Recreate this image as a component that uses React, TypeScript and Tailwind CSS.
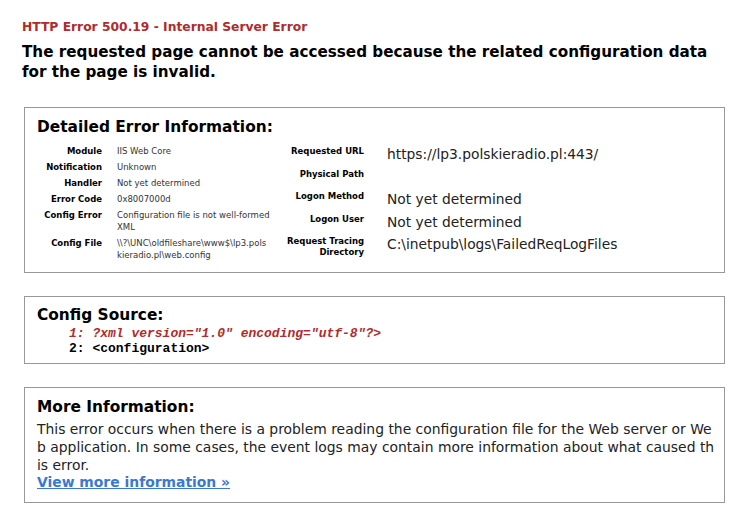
const sans = "font-['DejaVu_Sans','Verdana',sans-serif]"
const mono = "font-['Liberation_Mono','Courier_New',monospace]"

const leftRows: { label: string; value: string[] }[] = [
  { label: "Module", value: ["IIS Web Core"] },
  { label: "Notification", value: ["Unknown"] },
  { label: "Handler", value: ["Not yet determined"] },
  { label: "Error Code", value: ["0x8007000d"] },
  { label: "Config Error", value: ["Configuration file is not well-formed", "XML"] },
  { label: "Config File", value: ["\\\\?\\UNC\\oldfileshare\\www$\\lp3.pols", "kieradio.pl\\web.config"] },
]

const rightRows: { label: string[]; value: string }[] = [
  { label: ["Requested URL"], value: "https://lp3.polskieradio.pl:443/" },
  { label: ["Physical Path"], value: "" },
  { label: ["Logon Method"], value: "Not yet determined" },
  { label: ["Logon User"], value: "Not yet determined" },
  { label: ["Request Tracing", "Directory"], value: "C:\\inetpub\\logs\\FailedReqLogFiles" },
]

const paragraph = [
  "This error occurs when there is a problem reading the configuration file for the Web server or We",
  "b application. In some cases, the event logs may contain more information about what caused th",
  "is error.",
]

export default function App() {
  return (
    <div className={`w-[749px] h-[513px] overflow-hidden bg-white px-[22px] pt-[19px] text-black ${sans}`}>
      <h1 className="text-[12.3px] leading-[16px] font-bold text-[#b02b2b] whitespace-nowrap">
        HTTP Error 500.19 - Internal Server Error
      </h1>
      <h2 className="mt-[7px] text-[15.2px] leading-[20px] font-bold whitespace-nowrap">
        The requested page cannot be accessed because the related configuration data
        <br />
        for the page is invalid.
      </h2>

      <section className="mt-[25px] ml-[2px] w-[701px] border border-[#999] px-[12px] pt-[10px] pb-[11px]">
        <h3 className="text-[15.4px] leading-[18px] font-bold">Detailed Error Information:</h3>
        <div className="mt-[9px] flex">
          <div className="flex w-[250px] flex-col gap-[4px]">
            {leftRows.map((row) => (
              <div key={row.label} className="flex items-start text-[8.5px] leading-[12px]">
                <div className="w-[65px] shrink-0 text-right font-bold whitespace-nowrap">{row.label}</div>
                <div className="ml-[15px] text-[#333] whitespace-nowrap">
                  {row.value.map((line) => (
                    <div key={line}>{line}</div>
                  ))}
                </div>
              </div>
            ))}
          </div>
          <div className="flex flex-col gap-[4.5px]">
            {rightRows.map((row) => (
              <div key={row.label[0]} className="flex items-start">
                <div className="w-[77px] shrink-0 text-right text-[8.5px] leading-[11px] pt-[1px] font-bold whitespace-nowrap">
                  {row.label.map((line) => (
                    <div key={line}>{line}</div>
                  ))}
                </div>
                <div className="ml-[23px] min-h-[18px] text-[13.8px] leading-[18px] text-[#222] whitespace-nowrap">
                  {row.value}
                </div>
              </div>
            ))}
          </div>
        </div>
      </section>

      <section className="mt-[23px] ml-[2px] w-[701px] border border-[#999] px-[12px] pt-[9px] pb-[7px]">
        <h3 className="text-[15.4px] leading-[18px] font-bold">Config Source:</h3>
        <pre className={`mt-[2px] ml-[32px] text-[13px] leading-[15px] font-bold ${mono}`}>
          <div className="italic text-[#b02b2b]">1: ?xml version="1.0" encoding="utf-8"?&gt;</div>
          <div>2: &lt;configuration&gt;</div>
        </pre>
      </section>

      <section className="mt-[23px] ml-[2px] w-[701px] border border-[#999] px-[12px] pt-[10px] pb-[11px]">
        <h3 className="text-[15.4px] leading-[18px] font-bold">More Information:</h3>
        <div className="mt-[4px] text-[13.9px] leading-[18px] text-[#222]">
          {paragraph.map((line) => (
            <div key={line} className="whitespace-nowrap">
              {line}
            </div>
          ))}
          <a href="#" className="block font-bold leading-[17px] text-[#3a78d2] underline">
            View more information »
          </a>
        </div>
      </section>
    </div>
  )
}
